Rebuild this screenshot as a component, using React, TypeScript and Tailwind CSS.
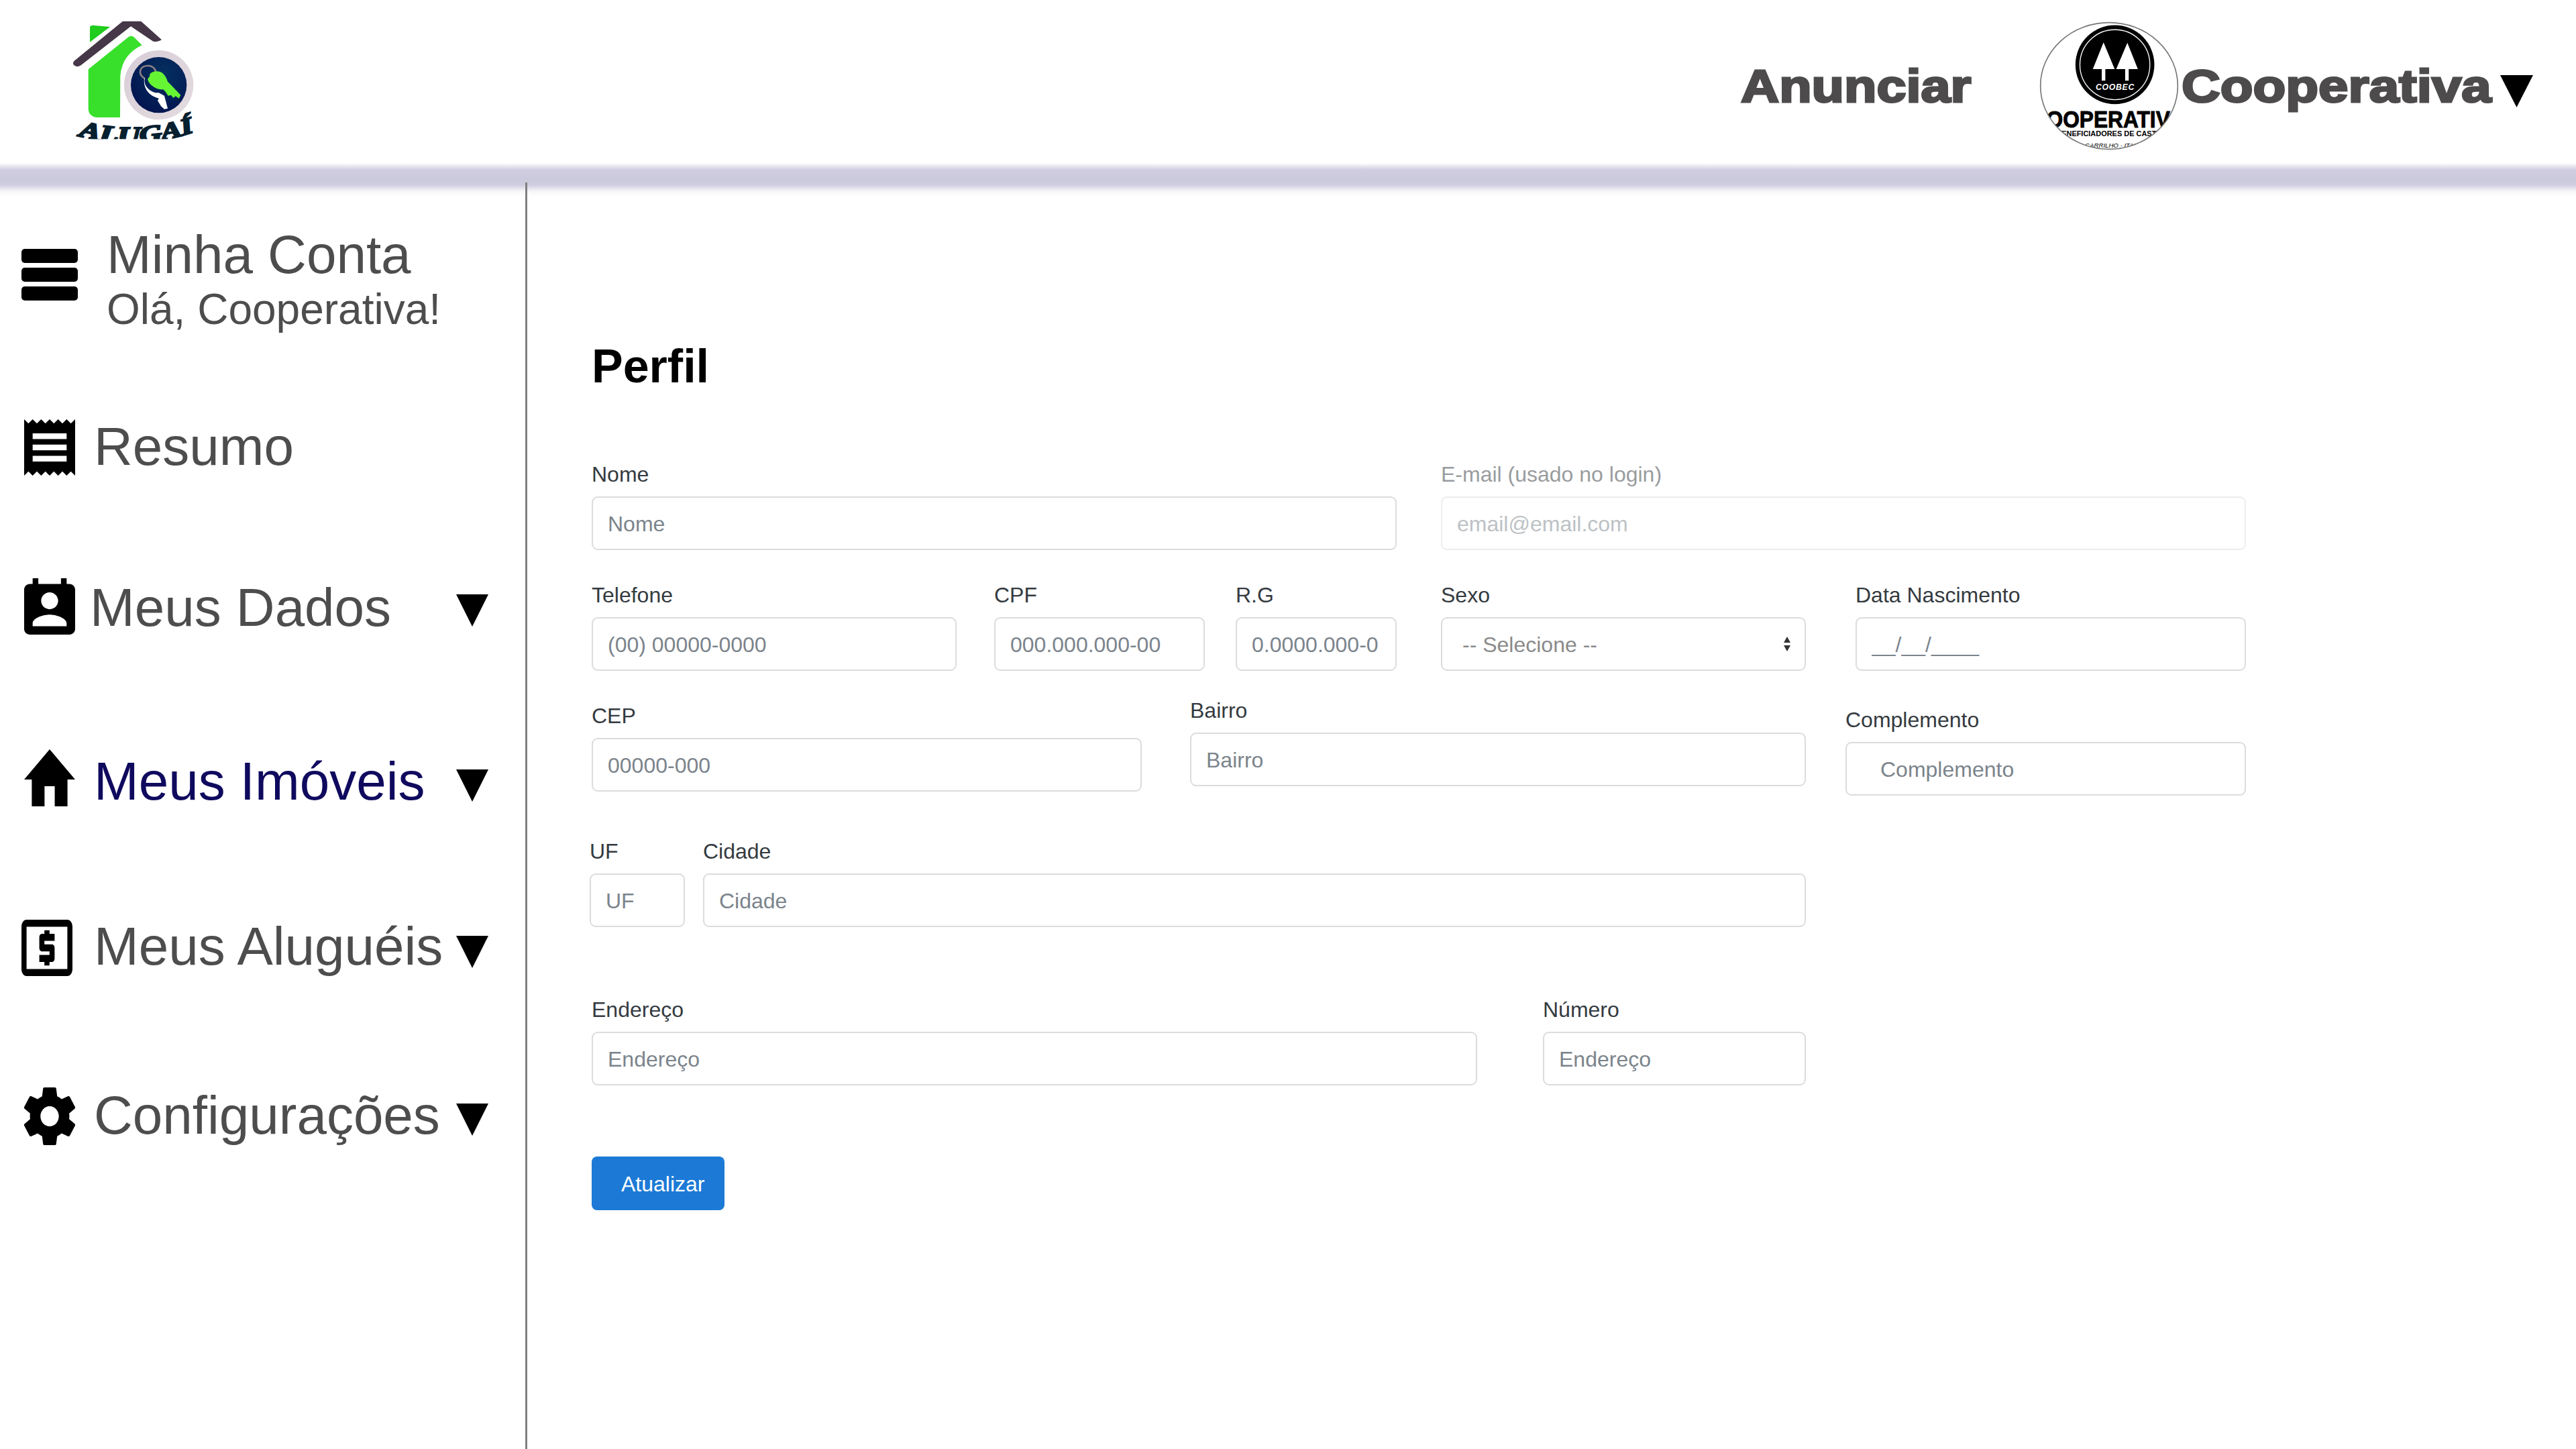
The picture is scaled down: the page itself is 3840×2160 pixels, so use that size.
const font = "font-['Liberation_Sans',Arial,sans-serif]";

function Logo() {
  return (
    <svg viewBox="0 0 720 630" className="w-[240px] h-[210px] mt-[10px] ml-[80px] shrink-0">
      <defs>
        <radialGradient id="navy" cx="0.6" cy="0.3" r="0.8">
          <stop offset="0" stopColor="#04305f" />
          <stop offset="1" stopColor="#03124f" />
        </radialGradient>
        <linearGradient id="ringg" x1="0" y1="0" x2="1" y2="1">
          <stop offset="0" stopColor="#d8cdd8" />
          <stop offset="1" stopColor="#e4dcdf" />
        </linearGradient>
        <clipPath id="logoClip"><rect x="0" y="65" width="720" height="527" /></clipPath>
        <path id="arc" d="M112 578 Q380 650 650 552" />
      </defs>
      <g clipPath="url(#logoClip)">
        <path d="M92 242 L315 60 L385 60 L483 148 Q465 160 445 155 L345 88 L122 262 Q100 275 88 258 Q85 250 92 242Z" fill="#463748" />
        <path d="M162 92 Q164 83 175 83 L252 90 L162 158Z" fill="#20cc1c" />
        <path d="M155 280 L335 135 Q347 127 358 135 L395 172 Q305 215 298 310 L297 495 L190 495 Q158 490 155 460Z" fill="#38e02c" />
        <circle cx="470" cy="350" r="155" fill="url(#ringg)" />
        <circle cx="470" cy="350" r="125" fill="url(#navy)" />
        <path d="M408 322 C372 300 385 262 425 264 C450 266 465 290 455 318" fill="none" stroke="#8a7f85" strokeWidth="8" />
        <path d="M408 320 C400 345 420 375 455 385 L470 385 L495 398 L510 455 L495 458 L480 445 L465 420 L470 410 L455 405 C420 390 400 360 405 320Z" fill="#ffffff" />
        <path d="M430 310 C425 290 470 280 490 300 C500 310 505 320 510 335 L568 395 L560 410 L545 400 L535 408 L525 395 L512 398 L500 380 L490 370 C465 375 425 350 420 325Z" fill="#66f533" />
        <text fontFamily="'Liberation Serif',serif" fontWeight="700" fontStyle="italic" fontSize="104" fill="#06202f" stroke="#06202f" strokeWidth="7" textLength="525" lengthAdjust="spacingAndGlyphs">
          <textPath href="#arc">ALUGAÍ</textPath>
        </text>
      </g>
    </svg>
  );
}

function Coobec() {
  return (
    <svg viewBox="90 35 626 576" className="w-[208px] h-[192px] shrink-0">
      <defs>
        <clipPath id="oval"><ellipse cx="403" cy="323" rx="308" ry="284" /></clipPath>
      </defs>
      <g clipPath="url(#oval)">
        <rect x="90" y="35" width="626" height="576" fill="#ffffff" />
        <circle cx="429" cy="228" r="177" fill="#000000" />
        <circle cx="429" cy="228" r="157" fill="none" stroke="#ffffff" strokeWidth="4" />
        <path d="M378 128 L330 248 L370 248 L370 300 L386 300 L386 248 L428 248Z" fill="#ffffff" />
        <path d="M485 130 L435 248 L475 248 L475 300 L491 300 L491 248 L532 248Z" fill="#ffffff" />
        <text x="430" y="342" textAnchor="middle" fontFamily="'Liberation Sans',sans-serif" fontWeight="700" fontStyle="italic" fontSize="37" letterSpacing="2" fill="#ffffff">COOBEC</text>
        <text x="53" y="511" fontFamily="'Liberation Sans',sans-serif" fontWeight="700" fontSize="108" stroke="#000" strokeWidth="3" fill="#000000" textLength="685" lengthAdjust="spacingAndGlyphs">COOPERATIVA</text>
        <text x="166" y="548" fontFamily="'Liberation Sans',sans-serif" fontWeight="700" fontSize="33" fill="#000000">BENEFICIADORES DE CASTANHA</text>
        <text x="184" y="599" fontFamily="'Liberation Sans',sans-serif" fontStyle="italic" fontSize="29" fill="#000000">PEDRO CARRILHO - ITAPIPOCA</text>
      </g>
      <ellipse cx="403" cy="323" rx="308" ry="284" fill="none" stroke="#777777" strokeWidth="5" />
    </svg>
  );
}

function Tri({ className }: { className: string }) {
  return (
    <svg viewBox="0 0 48 48" preserveAspectRatio="none" className={className}>
      <path d="M0 0 L48 0 L24 48Z" fill="#000000" />
    </svg>
  );
}

function NavRow({ top, left, gap, text, color, icon, triTop }: { top: string; left: string; gap: string; text: string; color: string; icon: React.ReactNode; triTop?: string }) {
  return (
    <div className={`flex items-center h-[100px] pr-[55px] ${top} ${left}`}>
      {icon}
      <span className={`text-[80px] leading-[92px] pt-[3px] whitespace-nowrap ${gap} ${color}`}>{text}</span>
      {triTop ? <Tri className={`ml-auto w-[48px] h-[48px] shrink-0 ${triTop}`} /> : null}
    </div>
  );
}

function Label({ children }: { children: React.ReactNode }) {
  return <label className="text-[32px] leading-[48px] pt-[1px] mb-[9px] text-[#343a40] whitespace-nowrap">{children}</label>;
}

function Field({ label, placeholder, width, top, disabled, px }: { label: string; placeholder: string; width: string; top?: string; disabled?: boolean; px?: string }) {
  return (
    <div className={`flex flex-col shrink-0 ${width} ${top ?? ""} ${disabled ? "opacity-50" : ""}`}>
      <Label>{label}</Label>
      <input
        disabled={disabled}
        placeholder={placeholder}
        className={`w-full h-[80px] pt-[2px] bg-white border-2 border-[#dcdcdc] rounded-[9px] text-[32px] outline-none placeholder:text-[#7b848c] placeholder:opacity-100 ${px ?? "px-[22px]"}`}
      />
    </div>
  );
}

export default function App() {
  return (
    <div className={`w-[3840px] h-[2160px] bg-white overflow-hidden ${font}`}>
      <header className="flex justify-between h-[243px] mb-[29px] bg-white">
        <Logo />
        <div className="flex items-center h-[256px] pr-[64px] shrink-0">
          <span className="block w-[343px] mr-[102px] origin-left scale-x-[1.165] text-[68px] leading-[84px] font-bold text-[#4d4b4c] [-webkit-text-stroke:3px_#4d4b4c] whitespace-nowrap">Anunciar</span>
          <Coobec />
          <span className="block w-[463px] ml-[4px] mr-[12px] origin-left scale-x-[1.175] text-[68px] leading-[84px] font-bold text-[#4d4b4c] [-webkit-text-stroke:3px_#4d4b4c] whitespace-nowrap">Cooperativa</span>
          <Tri className="w-[49px] h-[48px] mt-[16px] shrink-0" />
        </div>
      </header>
      <div className="h-[50px] -mt-[29px] -mb-[21px] relative z-10 bg-[linear-gradient(180deg,#ffffff_0%,#cfcddf_20%,#cbc9dc_50%,#d0cee0_66%,#f6f6f9_84%,#ffffff_100%)]" />
      <div className="flex h-[1888px]">
        <aside className="relative z-20 w-[786px] shrink-0 border-r-[3px] border-[#808080] pt-[64px]">
          <div className="flex items-center pl-[32px]">
            <svg viewBox="0 0 84 77" className="w-[84px] h-[77px] -mt-[16px] shrink-0">
              <rect x="0" y="0" width="84" height="21" rx="5" />
              <rect x="0" y="28" width="84" height="21" rx="5" />
              <rect x="0" y="56" width="84" height="21" rx="5" />
            </svg>
            <div className="ml-[43px] text-[#4d4d4d] whitespace-nowrap">
              <div className="text-[80px] leading-[88px]">Minha Conta</div>
              <div className="text-[64px] leading-[74px]">Olá, Cooperativa!</div>
            </div>
          </div>
          <NavRow
            top="mt-[116px]"
            left="pl-[36px]"
            gap="ml-[28px]"
            text="Resumo"
            color="text-[#4d4d4d]"
            icon={
              <svg viewBox="3 2 18 20" preserveAspectRatio="none" className="w-[76px] h-[84px] mt-[6px] shrink-0">
                <path d="M18 17H6v-2h12v2zm0-4H6v-2h12v2zm0-4H6V7h12v2zM3 22l1.5-1.5L6 22l1.5-1.5L9 22l1.5-1.5L12 22l1.5-1.5L15 22l1.5-1.5L18 22l1.5-1.5L21 22V2l-1.5 1.5L18 2l-1.5 1.5L15 2l-1.5 1.5L12 2l-1.5 1.5L9 2 7.5 3.5 6 2 4.5 3.5 3 2v20z" />
              </svg>
            }
          />
          <NavRow
            top="mt-[140px]"
            left="pl-[36px]"
            gap="ml-[22px]"
            text="Meus Dados"
            color="text-[#4d4d4d]"
            triTop="mt-[12px]"
            icon={
              <svg viewBox="3 1 18 20" preserveAspectRatio="none" className="w-[76px] h-[84px] shrink-0">
                <path d="M19 3h-1V1h-2v2H8V1H6v2H5c-1.11 0-2 .9-2 2v14c0 1.1.89 2 2 2h14c1.1 0 2-.9 2-2V5c0-1.1-.9-2-2-2zm-7 3c1.66 0 3 1.34 3 3s-1.34 3-3 3-3-1.34-3-3 1.34-3 3-3zm6 12H6v-1c0-2 4-3.1 6-3.1s6 1.1 6 3.1v1z" />
              </svg>
            }
          />
          <NavRow
            top="mt-[159px]"
            left="pl-[36px]"
            gap="ml-[28px]"
            text="Meus Imóveis"
            color="text-[#0f0a5e]"
            triTop="mt-[16px]"
            icon={
              <svg viewBox="2 3 20 17" preserveAspectRatio="none" className="w-[76px] h-[85px] -mt-[7px] shrink-0">
                <path d="M10 20v-6h4v6h5v-8h3L12 3 2 12h3v8z" />
              </svg>
            }
          />
          <NavRow
            top="mt-[146px]"
            left="pl-[32px]"
            gap="ml-[32px]"
            text="Meus Aluguéis"
            color="text-[#4d4d4d]"
            triTop="mt-[20px]"
            icon={
              <svg viewBox="2 4 20 16" preserveAspectRatio="none" className="w-[76px] h-[84px] mt-[8px] shrink-0">
                <path d="M11 17h2v-1h1c.55 0 1-.45 1-1v-3c0-.55-.45-1-1-1h-3v-1h4V8h-2V7h-2v1h-1c-.55 0-1 .45-1 1v3c0 .55.45 1 1 1h3v1H9v2h2v1zm9-13H4c-1.11 0-1.99.89-1.99 2L2 18c0 1.11.89 2 2 2h16c1.11 0 2-.89 2-2V6c0-1.11-.89-2-2-2zm0 14H4V6h16v12z" />
              </svg>
            }
          />
          <NavRow
            top="mt-[152px]"
            left="pl-[36px]"
            gap="ml-[28px]"
            text="Configurações"
            color="text-[#4d4d4d]"
            triTop="mt-[16px]"
            icon={
              <svg viewBox="2.3 2 19.4 20" preserveAspectRatio="none" className="w-[76px] h-[86px] mt-[6px] shrink-0">
                <path d="M19.43 12.98c.04-.32.07-.64.07-.98s-.03-.66-.07-.98l2.11-1.65c.19-.15.24-.42.12-.64l-2-3.46c-.12-.22-.39-.3-.61-.22l-2.49 1c-.52-.4-1.08-.73-1.69-.98l-.38-2.65C14.46 2.18 14.25 2 14 2h-4c-.25 0-.46.18-.49.42l-.38 2.65c-.61.25-1.17.59-1.69.98l-2.49-1c-.23-.09-.49 0-.61.22l-2 3.46c-.13.22-.07.49.12.64l2.11 1.65c-.04.32-.07.65-.07.98s.03.66.07.98l-2.11 1.65c-.19.15-.24.42-.12.64l2 3.46c.12.22.39.3.61.22l2.49-1c.52.4 1.08.73 1.69.98l.38 2.65c.03.24.24.42.49.42h4c.25 0 .46-.18.49-.42l.38-2.65c.61-.25 1.17-.59 1.69-.98l2.49 1c.23.09.49 0 .61-.22l2-3.46c.12-.22.07-.49-.12-.64l-2.11-1.65zM12 15.5c-1.93 0-3.5-1.57-3.5-3.5s1.57-3.5 3.5-3.5 3.5 1.57 3.5 3.5-1.57 3.5-3.5 3.5z" />
              </svg>
            }
          />
        </aside>
        <main className="flex-1 pl-[96px] pt-[235px]">
          <h1 className="text-[70px] leading-[78px] font-bold text-black mb-[97px]">Perfil</h1>
          <div className="flex">
            <Field label="Nome" placeholder="Nome" width="w-[1200px]" />
            <Field label="E-mail (usado no login)" placeholder="email@email.com" width="w-[1200px] ml-[66px]" disabled />
          </div>
          <div className="flex mt-[42px]">
            <Field label="Telefone" placeholder="(00) 00000-0000" width="w-[544px]" />
            <Field label="CPF" placeholder="000.000.000-00" width="w-[314px] ml-[56px]" />
            <Field label="R.G" placeholder="0.0000.000-0" width="w-[240px] ml-[46px]" />
            <div className="flex flex-col shrink-0 w-[544px] ml-[66px]">
              <Label>Sexo</Label>
              <div className="relative">
                <select className="w-full h-[80px] pt-[2px] bg-white border-2 border-[#dcdcdc] rounded-[9px] text-[32px] text-[#8a8a8a] pl-[30px] appearance-none outline-none">
                  <option>-- Selecione --</option>
                </select>
                <svg viewBox="0 0 12 22" className="absolute right-[22px] top-[29px] w-[12px] h-[22px]">
                  <path d="M6 0 L11 9 L1 9Z M1 13 L11 13 L6 22Z" fill="#333333" />
                </svg>
              </div>
            </div>
            <Field label="Data Nascimento" placeholder="__/__/____" width="w-[582px] ml-[74px]" />
          </div>
          <div className="flex items-start mt-[34px]">
            <Field label="CEP" placeholder="00000-000" width="w-[820px]" top="mt-[8px]" />
            <Field label="Bairro" placeholder="Bairro" width="w-[918px] ml-[72px]" />
            <Field label="Complemento" placeholder="Complemento" width="w-[597px] ml-[59px]" top="mt-[14px]" px="pl-[50px] pr-[22px]" />
          </div>
          <div className="flex mt-[58px] -ml-[3px]">
            <Field label="UF" placeholder="UF" width="w-[142px]" />
            <Field label="Cidade" placeholder="Cidade" width="w-[1644px] ml-[27px]" />
          </div>
          <div className="flex mt-[98px]">
            <Field label="Endereço" placeholder="Endereço" width="w-[1320px]" />
            <Field label="Número" placeholder="Endereço" width="w-[392px] ml-[98px]" />
          </div>
          <button className="block w-[198px] h-[80px] mt-[106px] pt-[1px] bg-[#1c7ad6] rounded-lg text-white text-[32px] text-left pl-[44px]">Atualizar</button>
        </main>
      </div>
    </div>
  );
}
